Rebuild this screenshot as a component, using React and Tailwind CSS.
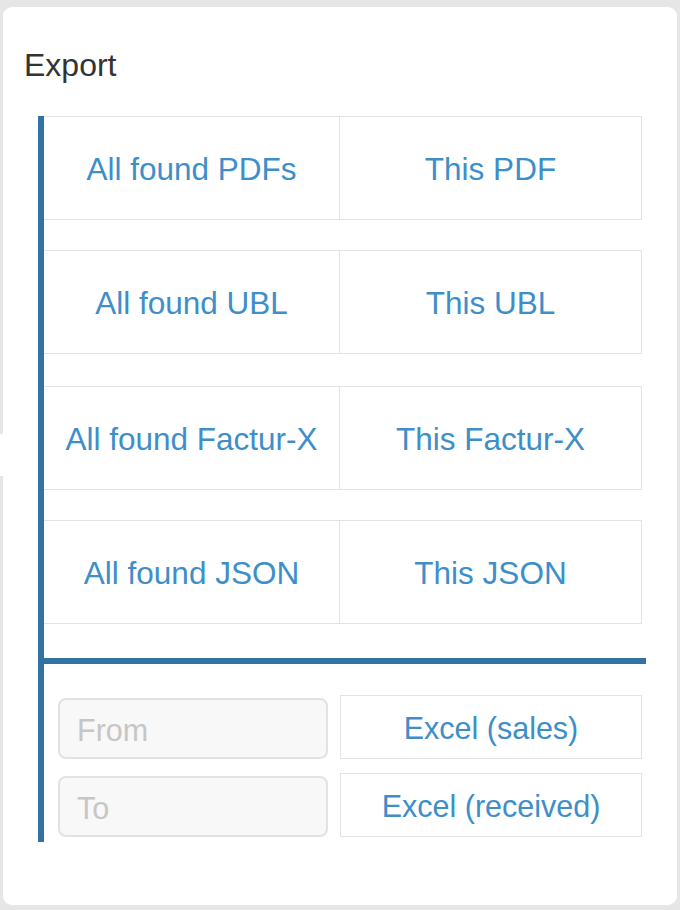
export default function App() {
  const rows = [
    ["All found PDFs", "This PDF", "mt-0"],
    ["All found UBL", "This UBL", "mt-[30px]"],
    ["All found Factur-X", "This Factur-X", "mt-[32px]"],
    ["All found JSON", "This JSON", "mt-[30px]"],
  ];
  return (
    <div
      className="relative min-h-[910px] w-[680px] bg-[#e6e6e6] pt-[7px] pl-[3px]"
      style={{ fontFamily: '"Liberation Sans", Arial, Helvetica, sans-serif' }}
    >
      <div className="absolute left-0 top-[434px] h-[42px] w-[4px] bg-white" />
      <div className="h-[898px] w-[674px] rounded-[9px] bg-white pt-[40px]">
        <div className="ml-[21px] text-[32px] leading-[36px] text-[#333333]">Export</div>
        <div className="ml-[35px] mt-[33px] w-[608px] border-l-[6px] border-[#3373a1] pb-[5px]">
          {rows.map(([a, b, m]) => (
            <div
              key={a}
              className={`${m} flex h-[104px] w-[598px] border border-l-0 border-[#e3e3e3] pt-[4px] text-[31.5px] text-[#3d8ec9]`}
            >
              <div className="-mt-[4px] flex w-[296px] items-center justify-center border-r border-[#e3e3e3] pt-[4px]">{a}</div>
              <div className="flex flex-1 items-center justify-center">{b}</div>
            </div>
          ))}
          <div className="-ml-[6px] mt-[34px] h-[6px] w-[608px] bg-[#3373a1]" />
          <div className="mt-[31px] flex flex-col gap-[14px]">
            <div className="flex items-end">
              <div className="ml-[14px] flex h-[61px] w-[270px] items-center rounded-[8px] border-2 border-[#e2e2e2] bg-[#f8f8f8] pl-[17px] pt-[4px] text-[30.5px] text-[#c6c6c6]">
                From
              </div>
              <div className="ml-[12px] flex h-[64px] w-[302px] items-center justify-center border border-[#e3e3e3] pt-[4px] text-[30.5px] text-[#3d8ec9]">
                Excel (sales)
              </div>
            </div>
            <div className="flex items-end">
              <div className="ml-[14px] flex h-[61px] w-[270px] items-center rounded-[8px] border-2 border-[#e2e2e2] bg-[#f8f8f8] pl-[17px] pt-[4px] text-[30.5px] text-[#c6c6c6]">
                To
              </div>
              <div className="ml-[12px] flex h-[64px] w-[302px] items-center justify-center border border-[#e3e3e3] pt-[4px] text-[30.5px] text-[#3d8ec9]">
                Excel (received)
              </div>
            </div>
          </div>
        </div>
      </div>
    </div>
  );
}
